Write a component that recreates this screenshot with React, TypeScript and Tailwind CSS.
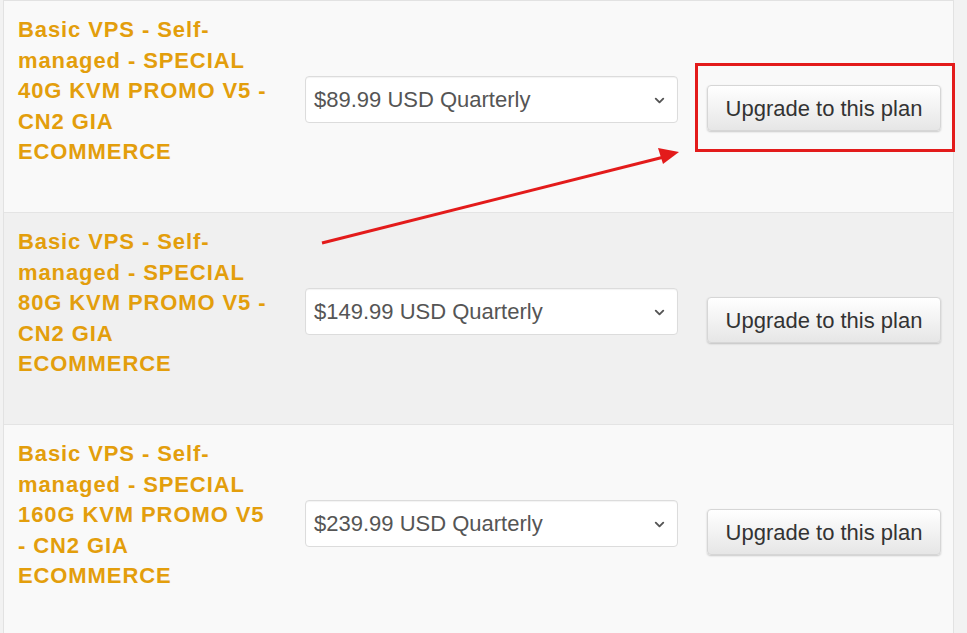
import { ChevronDown } from "lucide-react";

const PLANS = [
  { name: "Basic VPS - Self-managed - SPECIAL 40G KVM PROMO V5 - CN2 GIA ECOMMERCE", price: "$89.99 USD Quarterly", alt: false },
  { name: "Basic VPS - Self-managed - SPECIAL 80G KVM PROMO V5 - CN2 GIA ECOMMERCE", price: "$149.99 USD Quarterly", alt: true },
  { name: "Basic VPS - Self-managed - SPECIAL 160G KVM PROMO V5 - CN2 GIA ECOMMERCE", price: "$239.99 USD Quarterly", alt: false },
];

export default function App() {
  return (
    <div className="relative w-[967px] h-[633px] overflow-hidden bg-[#f2f2f2] font-['Liberation_Sans',Arial,sans-serif]">
      <div className="ml-[3px] w-[951px] border-x border-t border-[#e2e2e2]">
        {PLANS.map((p) => (
          <div
            key={p.price}
            className={`flex h-[212px] border-b border-[#e4e4e4] ${p.alt ? "bg-[#f0f0f0]" : "bg-[#f9f9f9]"}`}
          >
            <div className="w-[301px] shrink-0 pl-[14px] pr-[36px] pt-[14px]">
              <p className="text-[22px] leading-[30.5px] tracking-[0.9px] font-bold text-[#e39e0c]">{p.name}</p>
            </div>
            <div className="pt-[75px]">
              <div className="relative w-[373px] h-[47px] rounded-[4px] border border-[#dcdcdc] bg-white shadow-[inset_0_1px_1px_rgba(0,0,0,0.05)] flex items-center pl-[8px]">
                <span className="text-[22px] text-[#555]">{p.price}</span>
                <ChevronDown className="absolute right-[10px] top-[16px] w-[15px] h-[15px] text-[#555]" strokeWidth={3} />
              </div>
            </div>
            <div className="pt-[84px] pl-[29px]">
              <button className="w-[234px] h-[46px] rounded-[4px] border border-[#d6d6d6] bg-gradient-to-b from-white to-[#e6e6e6] shadow-[0_1px_2px_rgba(0,0,0,0.2)] text-[22px] text-[#333]">
                Upgrade to this plan
              </button>
            </div>
          </div>
        ))}
      </div>

      {/* annotation overlay */}
      <svg className="absolute inset-0 pointer-events-none" width="967" height="633" viewBox="0 0 967 633">
        <rect x="696.5" y="64.5" width="257" height="86" fill="none" stroke="#e31b1b" strokeWidth="3" />
        <line x1="322" y1="243" x2="664" y2="157" stroke="#e31b1b" strokeWidth="3" />
        <polygon points="679,152 658,148 663,164" fill="#e31b1b" />
      </svg>
    </div>
  );
}
